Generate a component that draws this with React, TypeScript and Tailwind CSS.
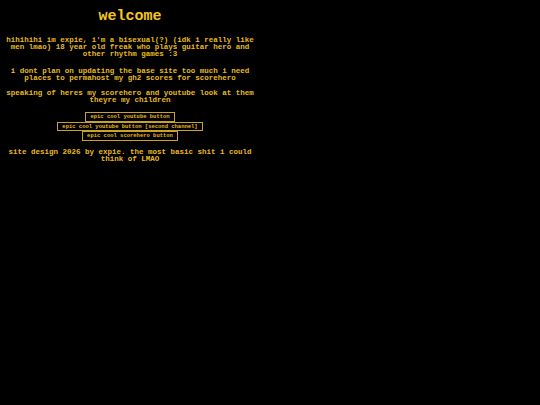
import React from 'react';

const links = [
  'epic cool youtube button',
  'epic cool youtube button [second channel]',
  'epic cool scorehero button',
];

const App = () => {
  return (
    <div className="min-h-[405px] w-full bg-black text-[#e6bb22]">
      <div
        className="w-[260px] pt-[9px] text-center text-[7.5px] leading-[7.2px] font-bold"
        style={{ fontFamily: '"Liberation Mono", "DejaVu Sans Mono", monospace' }}
      >
        <h1 className="text-[15px] leading-[16px] font-bold text-[#f7c81c]">welcome</h1>

        <p className="mt-[12px] px-[3px]">
          hihihihi im expie, i'm a bisexual(?) (idk i really like men lmao) 18 year old freak who plays
          guitar hero and other rhythm games :3
        </p>

        <p className="mt-[9px] px-[8px]">
          i dont plan on updating the base site too much i need places to permahost my gh2 scores for
          scorehero
        </p>

        <p className="mt-[8px] px-[2px]">
          speaking of heres my scorehero and youtube look at them theyre my children
        </p>

        <div className="mt-[8px] flex flex-col items-center">
          {links.map((label) => (
            <a
              key={label}
              href="#"
              className="block border border-[#c9a227] px-[4px] text-[5.5px] leading-[7.5px] text-[#e6bb22]"
            >
              {label}
            </a>
          ))}
        </div>

        <p className="mt-[8px] px-[4px]">
          site design 2026 by expie. the most basic shit i could think of LMAO
        </p>
      </div>
    </div>
  );
};

export default App;
